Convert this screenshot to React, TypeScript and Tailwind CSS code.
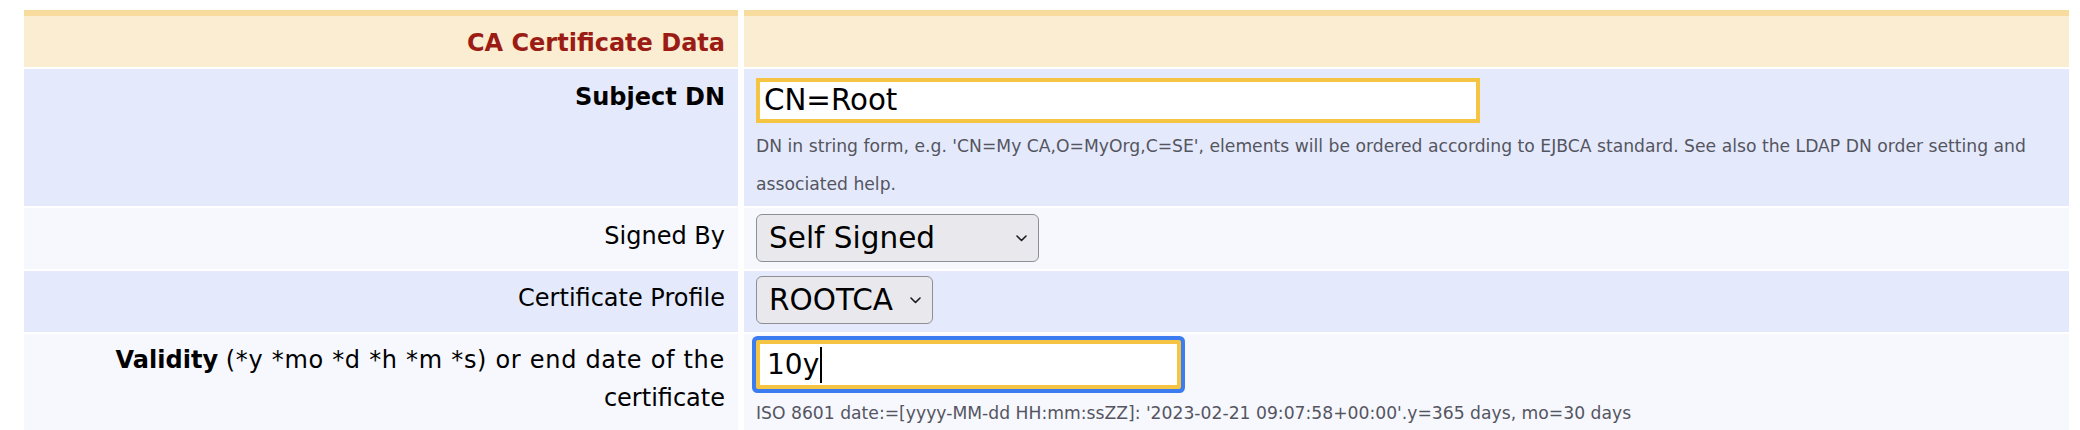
const Chevron = () => (
    <svg width="11" height="7" viewBox="0 0 11 7" fill="none" className="shrink-0">
        <path d="M1 1l4.5 4.5L10 1" stroke="#1c1c1e" strokeWidth="1.6" strokeLinecap="round" strokeLinejoin="round" />
    </svg>
);

const FakeSelect = ({ value, width }: { value: string; width: string }) => (
    <div
        className={`${width} h-[48px] flex items-center justify-between pl-[12px] pr-[11px] rounded-[6px] border-[1.5px] border-[#8e8e96] bg-[#e9e9ed] text-[29.5px] text-black`}
    >
        <span>{value}</span>
        <Chevron />
    </div>
);

const label = 'text-right pr-[13px] text-[24px] leading-[38px] text-black';
const hint = 'text-[17.2px] leading-[38px] text-[#55555f]';

export default function App() {
    return (
        <div className="min-h-[430px] bg-white pt-[10px] pl-[24px] font-['DejaVu_Sans',sans-serif]">
            <div className="grid grid-cols-[714px_1325px] grid-rows-[57px_137px_61px_61px_auto] gap-x-[6px] gap-y-[2px]">
                {/* header */}
                <div className="border-t-[6px] border-[#f8dc9e] bg-[#fbedd1] pr-[13px] pt-[8px] text-right text-[24px] leading-[38px] font-bold text-[#9b1c14]">
                    CA Certificate Data
                </div>
                <div className="border-t-[6px] border-[#f8dc9e] bg-[#fbedd1]" />

                {/* subject dn */}
                <div className={`${label} pt-[9px] bg-[#e4eafc] font-bold`}>Subject DN</div>
                <div className="bg-[#e4eafc] pl-[12px] pt-[9px]">
                    <div className="w-[724px] h-[45px] border-[4px] border-[#f5c443] bg-white pl-[4px] flex items-center text-[29.3px] text-black">
                        CN=Root
                    </div>
                    <p className={`${hint} mt-[4px] whitespace-nowrap`}>
                        DN in string form, e.g. 'CN=My CA,O=MyOrg,C=SE', elements will be ordered according to EJBCA standard. See also the LDAP DN order setting and
                        <br />
                        associated help.
                    </p>
                </div>

                {/* signed by */}
                <div className={`${label} pt-[9px] bg-[#f6f8fe]`}>Signed By</div>
                <div className="bg-[#f6f8fe] pl-[12px] pt-[6px]">
                    <FakeSelect value="Self Signed" width="w-[283px]" />
                </div>

                {/* certificate profile */}
                <div className={`${label} pt-[8px] bg-[#e4eafc]`}>Certificate Profile</div>
                <div className="bg-[#e4eafc] pl-[12px] pt-[5px]">
                    <FakeSelect value="ROOTCA" width="w-[177px]" />
                </div>

                {/* validity */}
                <div className={`${label} pt-[7px] bg-[#f6f8fe] pb-[20px]`}>
                    <b>Validity</b> <span className="tracking-[0.7px]">(*y *mo *d *h *m *s) or end date of the</span>
                    <br />
                    certificate
                </div>
                <div className="bg-[#f6f8fe] pl-[12px] pt-[6px]">
                    <div className="w-[425px] h-[49px] border-[4px] border-[#f5c443] bg-white rounded-[2px] ring-4 ring-[#3b7cf0] pl-[7px] flex items-center text-[28px] text-black">
                        <span>10y</span>
                        <span className="ml-[1px] w-[1.5px] h-[36px] bg-black" />
                    </div>
                    <p className={`${hint} mt-[5px]`}>
                        ISO 8601 date:=[yyyy-MM-dd HH:mm:ssZZ]: '2023-02-21 09:07:58+00:00'.y=365 days, mo=30 days
                    </p>
                </div>
            </div>
        </div>
    );
}
